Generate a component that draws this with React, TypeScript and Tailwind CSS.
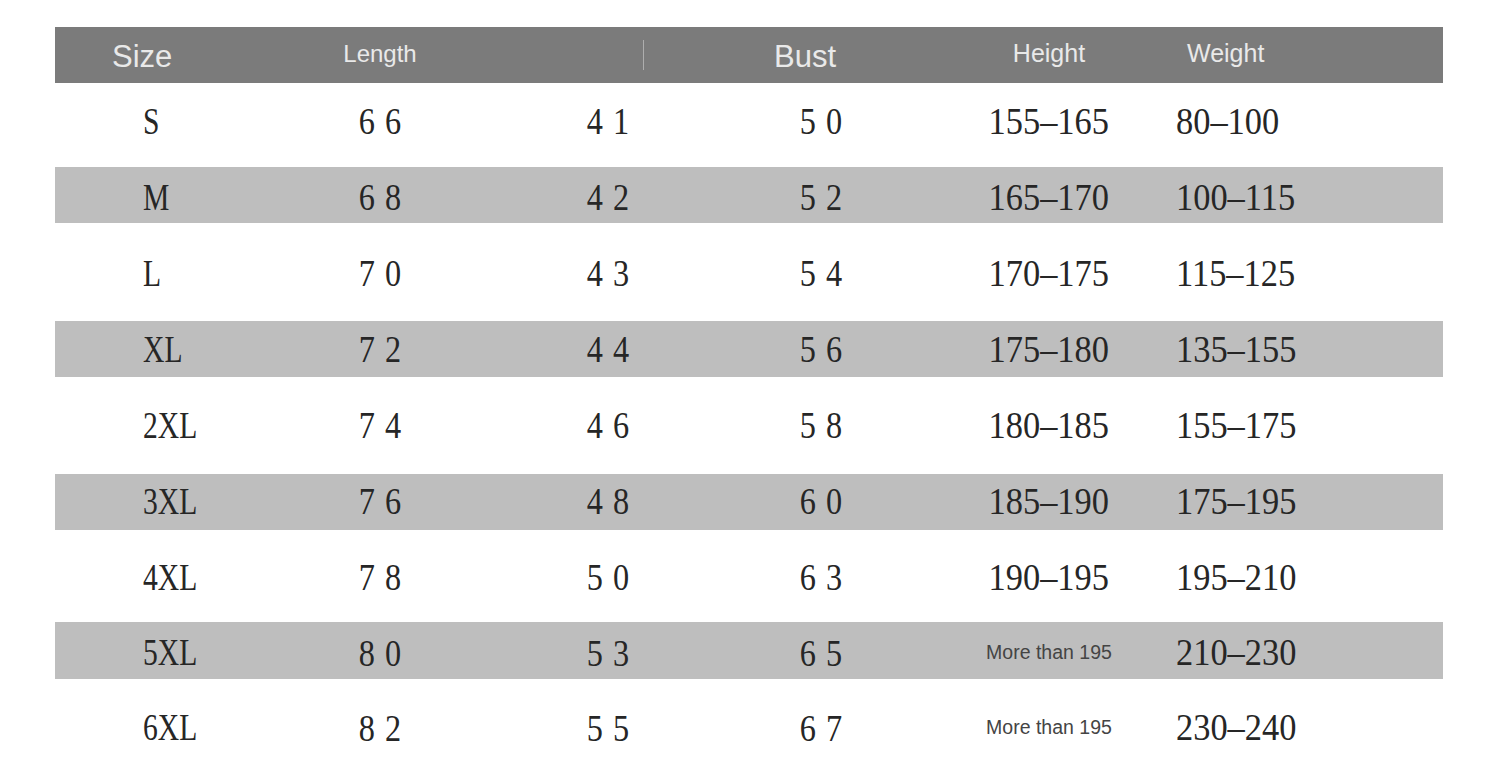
const rows = [
  { size: "S", length: "66", shoulder: "41", bust: "50", height: "155–165", weight: "80–100", h: "h-[84px] pb-[8px]", band: false },
  { size: "M", length: "68", shoulder: "42", bust: "52", height: "165–170", weight: "100–115", h: "h-[56px] pt-[4px]", band: true },
  { size: "L", length: "70", shoulder: "43", bust: "54", height: "170–175", weight: "115–125", h: "h-[98px] pt-[2px]", band: false },
  { size: "XL", length: "72", shoulder: "44", bust: "56", height: "175–180", weight: "135–155", h: "h-[56px]", band: true },
  { size: "2XL", length: "74", shoulder: "46", bust: "58", height: "180–185", weight: "155–175", h: "h-[97px] pb-[1px]", band: false },
  { size: "3XL", length: "76", shoulder: "48", bust: "60", height: "185–190", weight: "175–195", h: "h-[56px] pb-[2px]", band: true },
  { size: "4XL", length: "78", shoulder: "50", bust: "63", height: "190–195", weight: "195–210", h: "h-[92px] pt-[2px]", band: false },
  { size: "5XL", length: "80", shoulder: "53", bust: "65", height: "More than 195", weight: "210–230", h: "h-[57px] pt-[4px]", band: true },
  { size: "6XL", length: "82", shoulder: "55", bust: "67", height: "More than 195", weight: "230–240", h: "h-[81px] pt-[16px]", band: false },
];

const serif = "font-['Liberation_Serif',serif] leading-none text-[#262626]";
const sans = "font-['Liberation_Sans',Arial,sans-serif] leading-none text-[#e9e9e9]";

// two-digit values are drawn narrow and spaced out
function Pair({ value }: { value: string }) {
  return (
    <span className={`inline-block origin-center scale-x-[0.85] pl-[12px] tracking-[12px] text-[38px] ${serif}`}>
      {value}
    </span>
  );
}

function Header() {
  return (
    <div className="flex h-[56px] items-center bg-[#7b7b7b]">
      <div className={`w-[205px] pl-[57px] pt-[2px] text-[31px] ${sans}`}>Size</div>
      <div className={`w-[240px] text-center pb-[3px] text-[24px] ${sans}`}>Length</div>
      <div className="flex h-full w-[216px] items-center pl-[143px]">
        <div className="h-[30px] w-px bg-[#d0d0d0]/60" />
      </div>
      <div className={`w-[214px] pl-[58px] pt-[2px] text-[31px] ${sans}`}>Bust</div>
      <div className={`w-[238px] text-center pb-[3px] text-[25px] ${sans}`}>Height</div>
      <div className={`flex-1 pl-[19px] pb-[3px] text-[25px] ${sans}`}>Weight</div>
    </div>
  );
}

export default function App() {
  return (
    <div className="h-[760px] w-[1500px] overflow-hidden bg-white pt-[27px] pl-[55px] pr-[57px]">
      <Header />
      {rows.map((r) => (
        <div
          key={r.size}
          className={`flex items-center ${r.h} ${r.band ? "bg-[#bebebe]" : "bg-white"}`}
        >
          <div className="w-[205px] pl-[88px]">
            <span className={`inline-block origin-left scale-x-[0.8] text-[37px] ${serif}`}>{r.size}</span>
          </div>
          <div className="w-[240px] text-center">
            <Pair value={r.length} />
          </div>
          <div className="w-[216px] text-center">
            <Pair value={r.shoulder} />
          </div>
          <div className="w-[214px] pl-[68px]">
            <Pair value={r.bust} />
          </div>
          <div className="w-[238px] text-center">
            {r.height.startsWith("More") ? (
              <span className="font-['Liberation_Sans',Arial,sans-serif] text-[19.5px] leading-none text-[#444]">
                {r.height}
              </span>
            ) : (
              <span className={`inline-block origin-center scale-x-[0.93] text-[37px] ${serif}`}>{r.height}</span>
            )}
          </div>
          <div className="flex-1 pl-[8px]">
            <span className={`inline-block origin-left scale-x-[0.93] text-[37px] ${serif}`}>{r.weight}</span>
          </div>
        </div>
      ))}
    </div>
  );
}
